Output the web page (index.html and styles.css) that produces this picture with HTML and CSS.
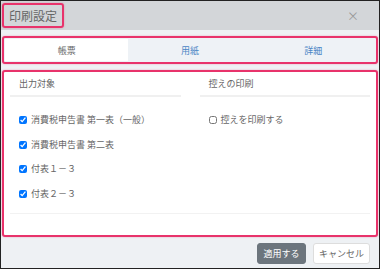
FILE: index.html
```html
<!DOCTYPE html>
<html lang="ja">
<head>
  <meta charset="UTF-8" />
  <title>印刷設定</title>
  <link rel="stylesheet" href="styles.css">
</head>
<body>
  <div class="dialog">
    <div class="dialog-header">
      <div class="dialog-title mark">印刷設定</div>
      <span class="close-btn">×</span>
    </div>

    <div class="dialog-body">
      <div class="tabs mark">
        <button class="tab-button active">帳票</button>
        <button class="tab-button">用紙</button>
        <button class="tab-button">詳細</button>
      </div>

      <div class="panel mark">
        <div class="columns">
          <div class="column">
            <div class="column-title">出力対象</div>
            <label class="check"><input type="checkbox" checked> 消費税申告書 第一表（一般）</label>
            <label class="check"><input type="checkbox" checked> 消費税申告書 第二表</label>
            <label class="check"><input type="checkbox" checked> 付表１－３</label>
            <label class="check"><input type="checkbox" checked> 付表２－３</label>
          </div>
          <div class="column">
            <div class="column-title">控えの印刷</div>
            <label class="check"><input type="checkbox"> 控えを印刷する</label>
          </div>
        </div>
        <div class="panel-rule"></div>
      </div>

      <div class="dialog-footer">
        <button class="btn btn-apply">適用する</button>
        <button class="btn btn-cancel">キャンセル</button>
      </div>
    </div>
  </div>
</body>
</html>
```

FILE: styles.css
```css
body {
  margin: 0;
  font-family: "Noto Sans CJK JP", "Noto Sans", sans-serif;
  color: #666;
}
.dialog {
  width: 378px;
  height: 267px;
  border: 1px solid #222;
  background-color: #eef1f4;
  display: flex;
  flex-direction: column;
}
.mark {
  border: 2px solid #e8336b;
  border-radius: 3px;
  box-shadow: 0 0 2px rgba(232, 51, 107, 0.4);
}
.dialog-header {
  height: 29px;
  background-color: #d3d6d9;
  display: flex;
  align-items: center;
  justify-content: space-between;
  padding: 0 20px 0 1px;
}
.dialog-title {
  font-size: 12px;
  line-height: 21px;
  padding: 0 5px;
  color: #666;
}
.close-btn {
  font-size: 12px;
  color: #999;
}
.dialog-body {
  flex: 1;
  display: flex;
  flex-direction: column;
  padding: 6px 1px 0 1px;
}
.tabs {
  display: flex;
  height: 22px;
  padding: 1px;
  background-color: #eef2f6;
}
.tab-button {
  flex: 1;
  border: none;
  background: transparent;
  font-family: inherit;
  font-size: 9px;
  color: #4a86c5;
  padding: 0;
}
.tab-button.active {
  background-color: #fff;
  color: #666;
}
.panel {
  margin-top: 6px;
  height: 163px;
  background-color: #fff;
  padding: 0 6px;
  display: flex;
  flex-direction: column;
}
.columns {
  display: flex;
  gap: 19px;
  flex: 1;
}
.column {
  flex: 1;
  display: flex;
  flex-direction: column;
}
.column-title {
  font-size: 9px;
  line-height: 12px;
  padding: 6px 9px 5px;
  border-bottom: 2px solid #f0f0f0;
  margin-bottom: 17px;
}
.check {
  font-size: 9px;
  line-height: 12px;
  display: flex;
  align-items: center;
  gap: 4px;
  padding-left: 9px;
  margin-bottom: 12.5px;
}
.check input {
  margin: 0;
  width: 8px;
  height: 8px;
}
.panel-rule {
  border-top: 1px solid #f2f2f2;
  margin-bottom: 21px;
}
.dialog-footer {
  display: flex;
  justify-content: flex-end;
  gap: 7px;
  padding: 6px 8px 0 0;
}
.btn {
  height: 21px;
  border-radius: 3px;
  font-family: inherit;
  font-size: 9px;
  padding: 0 5px;
  cursor: pointer;
}
.btn-apply {
  width: 49px;
  background-color: #6c757d;
  border: 1px solid #6c757d;
  color: #fff;
}
.btn-cancel {
  width: 57px;
  background-color: #fff;
  border: 1px solid #ddd;
  color: #666;
}
```
